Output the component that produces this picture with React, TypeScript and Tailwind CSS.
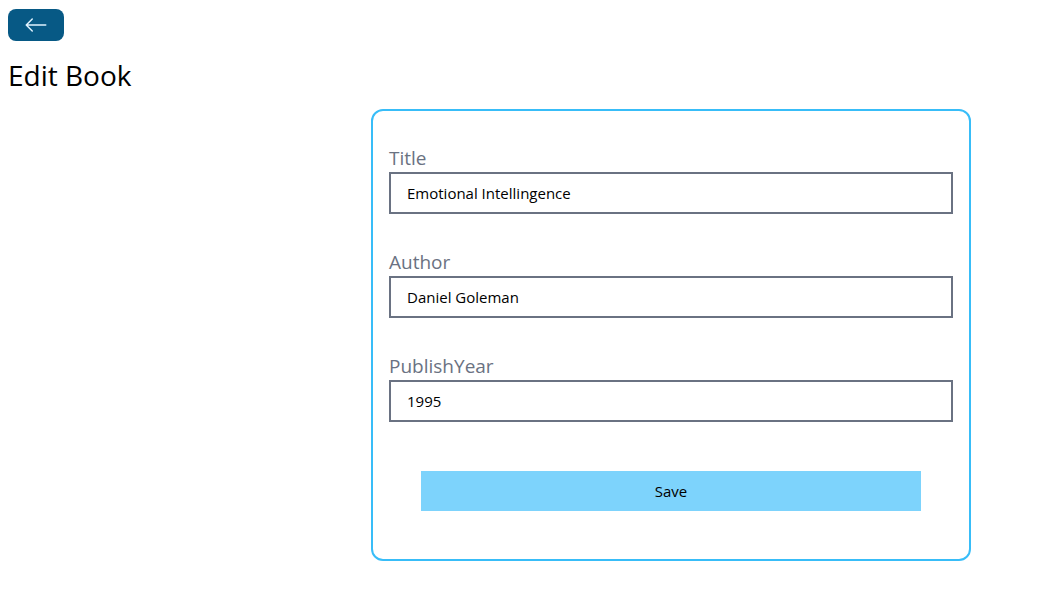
import { BsArrowLeft } from "react-icons/bs";

const fields = [
  { label: "Title", value: "Emotional Intellingence" },
  { label: "Author", value: "Daniel Goleman" },
  { label: "PublishYear", value: "1995" },
];

export default function App() {
  return (
    <div
      className="px-2 pt-[9px] min-h-screen bg-white text-black"
      style={{ fontFamily: '"Open Sans", "Noto Sans", sans-serif' }}
    >
      <div className="flex">
        <button className="bg-[#075985] text-[#e0f2fe] px-4 py-1 rounded-lg w-fit">
          <BsArrowLeft className="text-2xl" />
        </button>
      </div>
      <h1 className="text-[28px] leading-9 my-4">Edit Book</h1>
      <div className="flex flex-col border-2 border-[#38bdf8] rounded-xl w-[600px] px-4 pb-4 pt-[17px] ml-[363px]">
        {fields.map((f) => (
          <div key={f.label} className="mt-4 mb-[18px]">
            <label className="text-[19px] leading-[28px] mr-4 text-gray-500 block">
              {f.label}
            </label>
            <input
              type="text"
              defaultValue={f.value}
              className="border-2 border-gray-500 px-4 h-[42px] w-full text-[15px] outline-none"
            />
          </div>
        ))}
        <button className="p-2 bg-[#7dd3fc] mx-8 mt-[31px] mb-8 h-10 text-[15px]">Save</button>
      </div>
    </div>
  );
}
